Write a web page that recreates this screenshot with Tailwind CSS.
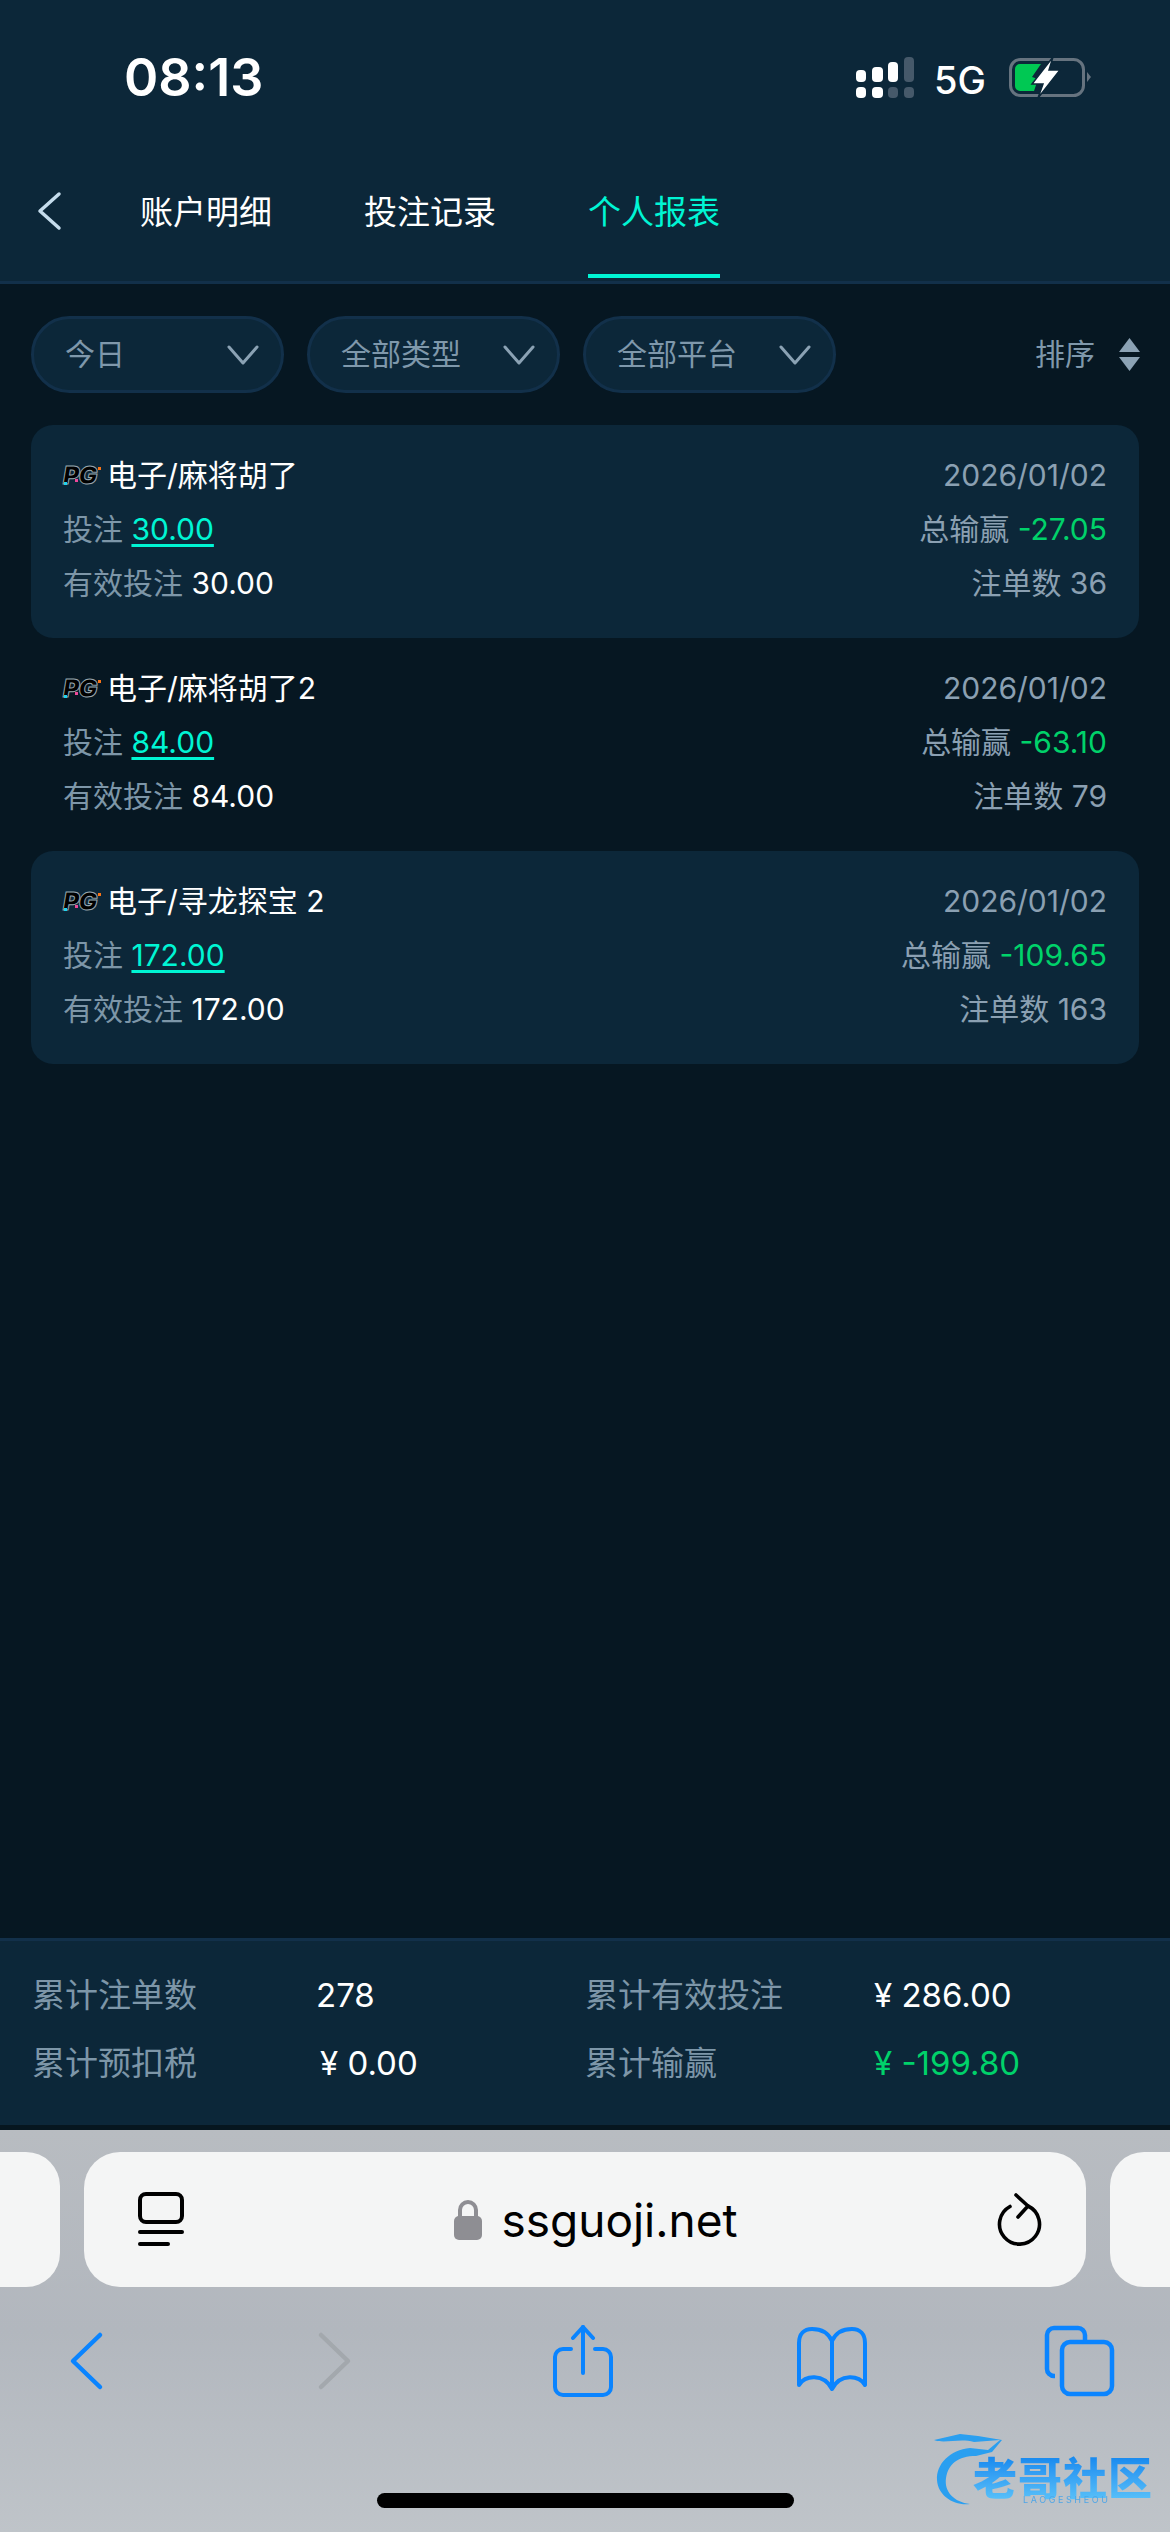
<!DOCTYPE html>
<html lang="zh-CN">
<head>
  <meta charset="UTF-8">
  <title>个人报表</title>
  <script src="https://cdn.jsdelivr.net/npm/@tailwindcss/browser@4"></script>
</head>
<body class="bg-[#061722]">
<div class="relative w-[1170px] h-[2532px] flex flex-col overflow-hidden font-['Inter','Noto_Sans_CJK_SC',sans-serif] text-white">

  <!-- top bar -->
  <header class="h-[284px] shrink-0 bg-[#0c2739] border-b-[3px] border-[#12304a]">
    <div class="h-[156px] relative">
      <span class="absolute left-[124px] top-[48px] text-[52px] leading-[60px] font-semibold">08:13</span>
      <svg class="absolute left-[850px] top-[50px]" width="250" height="56" viewBox="850 50 250 56">
        <g fill="#fff">
          <rect x="856" y="70" width="10" height="12" rx="4"/>
          <rect x="872" y="67" width="11" height="15" rx="4"/>
          <rect x="888" y="62" width="10" height="20" rx="4"/>
          <rect x="856" y="87" width="10" height="11" rx="4"/>
          <rect x="872" y="87" width="11" height="11" rx="4"/>
        </g>
        <g fill="#46596a">
          <rect x="904" y="57" width="10" height="25" rx="4"/>
          <rect x="888" y="87" width="10" height="11" rx="4"/>
          <rect x="904" y="87" width="10" height="11" rx="4"/>
        </g>
        <rect x="1010.5" y="59.5" width="73" height="36" rx="10" fill="none" stroke="#66737f" stroke-width="3"/>
        <path d="M1087 72 l4 5 l-4 5z" fill="#66737f"/>
        <path d="M1020 64 h21 l-9 13 l6 2 l-4 12 h-14 a5 5 0 0 1 -5 -5 v-17 a5 5 0 0 1 5 -5z" fill="#00c853"/>
        <path d="M1053 57 l-21 27 h11 l-5 14 l22 -28 h-11z" fill="#fff" stroke="#0c2739" stroke-width="1.5"/>
      </svg>
      <span class="absolute left-[934px] top-[57px] text-[38px] leading-[46px] font-medium">5G</span>
    </div>
    <div class="h-[125px] flex items-start">
      <svg class="ml-[36px] mt-[35px]" width="28" height="40" viewBox="0 0 28 40" fill="none" stroke="#c5dcec" stroke-width="3.5" stroke-linecap="round" stroke-linejoin="round"><path d="M23 3 L4 20 L23 37"/></svg>
      <nav class="flex ml-[76px] gap-[92px] text-[33px] leading-[44px]">
        <a class="h-[125px] pt-[34px]">账户明细</a>
        <a class="h-[125px] pt-[34px]">投注记录</a>
        <a class="h-[122px] pt-[34px] text-[#00f5d4] border-b-[4px] border-[#00f5d4]">个人报表</a>
      </nav>
    </div>
  </header>

  <!-- filters -->
  <div class="h-[141px] shrink-0 pt-[32px] pl-[31px] pr-[30px] flex items-start gap-[23px] text-[30px] text-[#7f98ab]">
    <div class="w-[253px] h-[77px] rounded-full bg-[#0c2739] border-[3px] border-[#12304a] flex items-center justify-between pl-[31px] pr-[22px]">
      <span>今日</span>
      <svg width="32" height="20" viewBox="0 0 32 20" fill="none" stroke="#8ba2b4" stroke-width="3" stroke-linecap="round" stroke-linejoin="round"><path d="M2 2 L16 18 L30 2"/></svg>
    </div>
    <div class="w-[253px] h-[77px] rounded-full bg-[#0c2739] border-[3px] border-[#12304a] flex items-center justify-between pl-[31px] pr-[22px]">
      <span>全部类型</span>
      <svg width="32" height="20" viewBox="0 0 32 20" fill="none" stroke="#8ba2b4" stroke-width="3" stroke-linecap="round" stroke-linejoin="round"><path d="M2 2 L16 18 L30 2"/></svg>
    </div>
    <div class="w-[253px] h-[77px] rounded-full bg-[#0c2739] border-[3px] border-[#12304a] flex items-center justify-between pl-[31px] pr-[22px]">
      <span>全部平台</span>
      <svg width="32" height="20" viewBox="0 0 32 20" fill="none" stroke="#8ba2b4" stroke-width="3" stroke-linecap="round" stroke-linejoin="round"><path d="M2 2 L16 18 L30 2"/></svg>
    </div>
    <div class="ml-auto h-[77px] flex items-center gap-[24px]">
      <span>排序</span>
      <svg width="21" height="34" viewBox="0 0 21 34" fill="#8ba2b4"><path d="M10.5 0 L21 14 H0z"/><path d="M0 19 H21 L10.5 33z"/></svg>
    </div>
  </div>

  <!-- report rows -->
  <main class="flex-1 px-[31px] text-[30px] leading-[40px]">
    <div class="h-[213px] rounded-[22px] bg-[#0c2739] px-[32px] pt-[30px] flex flex-col gap-[14px]">
      <div class="flex justify-between">
        <span class="flex items-center"><span class="relative w-[40px] mr-[4px] text-[25px] leading-[28px] font-black italic tracking-[-1px] text-black [-webkit-text-stroke:1px_#9aa7b0]">PG<i class="absolute left-[1px] bottom-[4px] w-[3px] h-[3px] bg-[#22d3ee]"></i><i class="absolute left-[12px] bottom-[7px] w-[3px] h-[3px] bg-[#ec4899]"></i><i class="absolute right-[2px] top-[6px] w-[3px] h-[3px] bg-[#f97316]"></i></span>电子/麻将胡了</span>
        <span class="text-[#8ba0b2]">2026/01/02</span>
      </div>
      <div class="flex justify-between">
        <span class="text-[#7d96a8]">投注 <a class="text-[#00f5d4] underline underline-offset-4 decoration-[3px]">30.00</a></span>
        <span class="text-[#8ba0b2]">总输赢 <b class="font-normal text-[#00d26a]">-27.05</b></span>
      </div>
      <div class="flex justify-between">
        <span class="text-[#7d96a8]">有效投注 <b class="font-normal text-white">30.00</b></span>
        <span class="text-[#8ba0b2]">注单数 36</span>
      </div>
    </div>

    <div class="h-[213px] rounded-[22px] px-[32px] pt-[30px] flex flex-col gap-[14px]">
      <div class="flex justify-between">
        <span class="flex items-center"><span class="relative w-[40px] mr-[4px] text-[25px] leading-[28px] font-black italic tracking-[-1px] text-black [-webkit-text-stroke:1px_#9aa7b0]">PG<i class="absolute left-[1px] bottom-[4px] w-[3px] h-[3px] bg-[#22d3ee]"></i><i class="absolute left-[12px] bottom-[7px] w-[3px] h-[3px] bg-[#ec4899]"></i><i class="absolute right-[2px] top-[6px] w-[3px] h-[3px] bg-[#f97316]"></i></span>电子/麻将胡了2</span>
        <span class="text-[#8ba0b2]">2026/01/02</span>
      </div>
      <div class="flex justify-between">
        <span class="text-[#7d96a8]">投注 <a class="text-[#00f5d4] underline underline-offset-4 decoration-[3px]">84.00</a></span>
        <span class="text-[#8ba0b2]">总输赢 <b class="font-normal text-[#00d26a]">-63.10</b></span>
      </div>
      <div class="flex justify-between">
        <span class="text-[#7d96a8]">有效投注 <b class="font-normal text-white">84.00</b></span>
        <span class="text-[#8ba0b2]">注单数 79</span>
      </div>
    </div>

    <div class="h-[213px] rounded-[22px] bg-[#0c2739] px-[32px] pt-[30px] flex flex-col gap-[14px]">
      <div class="flex justify-between">
        <span class="flex items-center"><span class="relative w-[40px] mr-[4px] text-[25px] leading-[28px] font-black italic tracking-[-1px] text-black [-webkit-text-stroke:1px_#9aa7b0]">PG<i class="absolute left-[1px] bottom-[4px] w-[3px] h-[3px] bg-[#22d3ee]"></i><i class="absolute left-[12px] bottom-[7px] w-[3px] h-[3px] bg-[#ec4899]"></i><i class="absolute right-[2px] top-[6px] w-[3px] h-[3px] bg-[#f97316]"></i></span>电子/寻龙探宝 2</span>
        <span class="text-[#8ba0b2]">2026/01/02</span>
      </div>
      <div class="flex justify-between">
        <span class="text-[#7d96a8]">投注 <a class="text-[#00f5d4] underline underline-offset-4 decoration-[3px]">172.00</a></span>
        <span class="text-[#8ba0b2]">总输赢 <b class="font-normal text-[#00d26a]">-109.65</b></span>
      </div>
      <div class="flex justify-between">
        <span class="text-[#7d96a8]">有效投注 <b class="font-normal text-white">172.00</b></span>
        <span class="text-[#8ba0b2]">注单数 163</span>
      </div>
    </div>
  </main>

  <!-- totals -->
  <section class="h-[187px] shrink-0 bg-[#0c2739] border-t-[3px] border-[#12304a] pl-[32px] pt-[32px] grid grid-cols-[284px_269px_289px_1fr] auto-rows-[68px] text-[33px] leading-[44px] text-[#7d96a8]">
    <span>累计注单数</span><span class="text-white">278</span>
    <span>累计有效投注</span><span class="text-white">¥ 286.00</span>
    <span>累计预扣税</span><span class="text-white pl-[4px]">¥ 0.00</span>
    <span>累计输赢</span><span class="text-[#00d26a]">¥ -199.80</span>
  </section>
  <div class="h-[5px] shrink-0 bg-[#06161f]"></div>

  <!-- safari chrome -->
  <div class="h-[402px] shrink-0 bg-gradient-to-b from-[#b8bcc1] via-[#b2b7be] to-[#bfc4c9] pt-[22px]">
    <div class="flex h-[135px] gap-[24px] -mx-[0px]">
      <div class="w-[60px] shrink-0 rounded-r-[34px] bg-[#f4f5f5]"></div>
      <div class="w-[1002px] shrink-0 rounded-[36px] bg-[#f4f5f5] flex items-center pl-[54px] pr-[43px] text-black">
        <svg width="46" height="56" viewBox="0 0 46 56" fill="none" stroke="#000" stroke-width="4" stroke-linecap="round"><rect x="2" y="2" width="42" height="28" rx="6"/><path d="M2 40 H44"/><path d="M2 52 H30"/></svg>
        <div class="flex-1 flex items-center justify-center pl-[10px] gap-[18px]">
          <svg width="30" height="42" viewBox="0 0 30 42"><path d="M7 18 V11 a8 8 0 0 1 16 0 V18" fill="none" stroke="#8e8e93" stroke-width="4"/><rect x="1" y="17" width="28" height="24" rx="5" fill="#8e8e93"/></svg>
          <span class="text-[46px] leading-[56px] font-['Inter',sans-serif]">ssguoji.net</span>
        </div>
        <svg width="46" height="54" viewBox="0 0 46 54" fill="none" stroke="#000" stroke-width="3.6" stroke-linecap="round" stroke-linejoin="round"><path d="M31 13 A20 20 0 1 1 13 13.5"/><path d="M19 2 L31 13 L21 24"/></svg>
      </div>
      <div class="flex-1 rounded-l-[34px] bg-[#f4f5f5]"></div>
    </div>

    <div class="flex justify-between pl-[46px] pr-[50px] mt-[38px]">
      <svg width="80" height="72" viewBox="0 0 80 72" fill="none" stroke="#0a84ff" stroke-width="4.5" stroke-linecap="round" stroke-linejoin="round"><path d="M54 10 L27 36 L54 62"/></svg>
      <svg width="80" height="72" viewBox="0 0 80 72" fill="none" stroke="#a3a8ad" stroke-width="4.5" stroke-linecap="round" stroke-linejoin="round"><path d="M26 10 L53 36 L26 62"/></svg>
      <svg width="80" height="72" viewBox="0 0 80 72" fill="none" stroke="#0a84ff" stroke-width="4" stroke-linecap="round" stroke-linejoin="round"><path d="M28 24 H20 a8 8 0 0 0 -8 8 V62 a8 8 0 0 0 8 8 H60 a8 8 0 0 0 8 -8 V32 a8 8 0 0 0 -8 -8 H52"/><path d="M40 2 V48"/><path d="M30 13 L40 2 L50 13"/></svg>
      <svg width="80" height="72" viewBox="0 0 80 72" fill="none" stroke="#0a84ff" stroke-width="4" stroke-linecap="round" stroke-linejoin="round"><path d="M40 64 V16 C36 7 28 4 20 4 C12 4 7 9 7 18 V60 C12 50 32 48 40 64 C48 48 68 50 73 60 V18 C73 9 68 4 60 4 C52 4 44 7 40 16"/></svg>
      <svg width="80" height="72" viewBox="0 0 80 72" fill="none" stroke="#0a84ff" stroke-width="4.5" stroke-linejoin="round"><path d="M15 51 H14 a7 7 0 0 1 -7 -7 V10 a7 7 0 0 1 7 -7 H38 a7 7 0 0 1 7 7 V17"/><rect x="22" y="17" width="50" height="52" rx="8"/></svg>
    </div>
  </div>

  <!-- home indicator -->
  <div class="absolute left-[377px] top-[2493px] w-[417px] h-[15px] rounded-full bg-black"></div>

  <!-- watermark -->
  <div class="absolute left-[930px] top-[2430px] w-[230px] h-[80px] blur-[0.6px]">
    <svg class="absolute left-0 top-0" width="110" height="80" viewBox="0 0 110 80"><path d="M4 10 C14 14 30 8 44 12 L70 10 L58 20 L40 18 C20 20 6 34 7 50 C8 66 24 76 40 74 C24 72 14 62 16 48 C18 34 28 26 46 26 L62 22 L72 10 L48 6 L30 4 Z" fill="#2a9ff0"/></svg>
    <span class="absolute left-[43px] top-[25px] text-[44px] leading-[48px] font-black tracking-[1px] whitespace-nowrap text-transparent bg-clip-text bg-gradient-to-b from-[#1487ee] to-[#5cc4fa]">老哥社区</span>
    <span class="absolute left-[93px] top-[64px] text-[9px] leading-[12px] tracking-[2.6px] text-[#4fa6e6]">LAOGESHEOU</span>
  </div>
</div>
</body>
</html>
